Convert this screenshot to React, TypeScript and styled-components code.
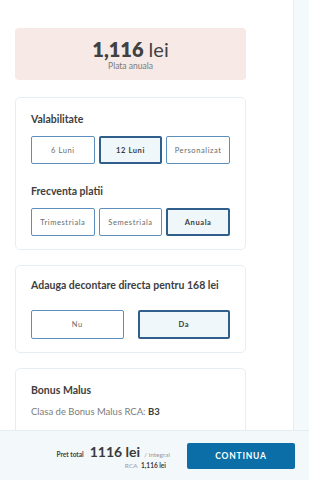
import React, { useState } from 'react';
import styled, { createGlobalStyle } from 'styled-components';

const GlobalStyle = createGlobalStyle`
    html, body {
        margin: 0;
        padding: 0;
        background: #ffffff;
        font-family: Lato, "Open Sans", sans-serif;
        color: #414141;
    }
    * { box-sizing: border-box; }
`;

export const Page = styled.div`
    display: flex;
    height: 480px;
    overflow: hidden;
`;

export const Main = styled.div`
    width: 293px;
    padding: 28px 47px 0 15px;
    display: flex;
    flex-direction: column;
    gap: 15px;
`;

export const Sidebar = styled.aside`
    flex: 1;
    background: #f4f9fc;
    border-left: 1px solid #e6eef4;
`;

export const PriceBox = styled.div`
    height: 52px;
    margin-bottom: 2px;
    background: #f6e9e6;
    border-radius: 4px;
    display: flex;
    flex-direction: column;
    align-items: center;
    justify-content: center;
`;

export const PriceValue = styled.div`
    font-size: 20px;
    line-height: 22px;
    color: #414141;
    b { font-weight: 800; }
    span { font-weight: 400; }
`;

export const PriceLabel = styled.div`
    font-size: 8.5px;
    color: #7a7a7a;
    margin-top: 1px;
`;

export const Card = styled.section<{ $pad?: string }>`
    flex-shrink: 0;
    border: 1px solid #e6eef4;
    border-radius: 5px;
    padding: ${p => p.$pad || '15px'};
    background: #fff;
`;

export const CardTitle = styled.h3<{ $gap?: number }>`
    margin: 0 0 ${p => p.$gap ?? 10}px;
    font-size: 10.5px;
    line-height: 13px;
    font-weight: 700;
    color: #3e3e3e;
`;

export const OptionRow = styled.div<{ $cols: number; $gap: number }>`
    display: grid;
    grid-template-columns: repeat(${p => p.$cols}, 1fr);
    gap: ${p => p.$gap}px;
`;

export const Option = styled.button<{ $active: boolean; $h: number }>`
    height: ${p => p.$h}px;
    padding: 0;
    font-family: inherit;
    font-size: 7.5px;
    letter-spacing: 0.6px;
    font-weight: ${p => (p.$active ? 700 : 400)};
    color: ${p => (p.$active ? '#3a3a3a' : '#6a6a6a')};
    background: ${p => (p.$active ? '#eff7fa' : '#fff')};
    border: ${p => (p.$active ? '2px solid #2f5f8a' : '1px solid #5c8fbd')};
    border-radius: 2px;
    cursor: pointer;
`;

export const Section = styled.div`
    margin-top: 21px;
`;

export const Info = styled.p`
    margin: 0;
    font-size: 9.5px;
    color: #7b7b7b;
    b { color: #3a3a3a; font-weight: 700; }
`;

export const Footer = styled.footer`
    position: fixed;
    left: 0;
    right: 0;
    bottom: 0;
    height: 50px;
    background: #f3f8fb;
    border-top: 1px solid #e3edf3;
    display: flex;
    align-items: center;
    justify-content: flex-end;
    gap: 17px;
    padding-right: 14px;
`;

export const Totals = styled.div`
    display: flex;
    flex-direction: column;
    align-items: flex-end;
`;

export const TotalLine = styled.div`
    display: flex;
    align-items: baseline;
    gap: 6px;
`;

export const TotalLabel = styled.span`
    font-size: 6.5px;
    font-weight: 700;
    color: #3e3e3e;
`;

export const TotalValue = styled.span`
    font-size: 14px;
    font-weight: 700;
    color: #3a3a3a;
`;

export const TotalUnit = styled.span`
    font-size: 6.5px;
    color: #9a9a9a;
    margin-left: -2px;
`;

export const SubTotal = styled.div`
    margin-top: 2px;
    margin-right: 4px;
    font-size: 6.5px;
    color: #9a9a9a;
    b { color: #3a3a3a; font-weight: 700; margin-left: 2px; }
`;

export const Continue = styled.button`
    width: 108px;
    height: 26px;
    border: none;
    border-radius: 2px;
    background: #0b6ea7;
    color: #fff;
    font-family: inherit;
    font-size: 8.5px;
    font-weight: 700;
    letter-spacing: 0.8px;
    cursor: pointer;
`;

const validity = ['6 Luni', '12 Luni', 'Personalizat'];
const frequency = ['Trimestriala', 'Semestriala', 'Anuala'];

export default function App() {
    const [term, setTerm] = useState('12 Luni');
    const [freq, setFreq] = useState('Anuala');
    const [direct, setDirect] = useState('Da');

    return (
        <>
            <GlobalStyle />
            <Page>
                <Main>
                    <PriceBox>
                        <PriceValue><b>1,116</b> <span>lei</span></PriceValue>
                        <PriceLabel>Plata anuala</PriceLabel>
                    </PriceBox>

                    <Card $pad="15px 15px 13px">
                        <CardTitle>Valabilitate</CardTitle>
                        <OptionRow $cols={3} $gap={4}>
                            {validity.map(v => (
                                <Option key={v} $h={28} $active={term === v} onClick={() => setTerm(v)}>{v}</Option>
                            ))}
                        </OptionRow>
                        <Section>
                            <CardTitle>Frecventa platii</CardTitle>
                            <OptionRow $cols={3} $gap={4}>
                                {frequency.map(f => (
                                    <Option key={f} $h={28} $active={freq === f} onClick={() => setFreq(f)}>{f}</Option>
                                ))}
                            </OptionRow>
                        </Section>
                    </Card>

                    <Card $pad="13px 15px 13px">
                        <CardTitle $gap={18}>Adauga decontare directa pentru 168 lei</CardTitle>
                        <OptionRow $cols={2} $gap={14}>
                            {['Nu', 'Da'].map(o => (
                                <Option key={o} $h={29} $active={direct === o} onClick={() => setDirect(o)}>{o}</Option>
                            ))}
                        </OptionRow>
                    </Card>

                    <Card $pad="15px 15px 30px">
                        <CardTitle $gap={9}>Bonus Malus</CardTitle>
                        <Info>Clasa de Bonus Malus RCA: <b>B3</b></Info>
                    </Card>
                </Main>
                <Sidebar />
            </Page>

            <Footer>
                <Totals>
                    <TotalLine>
                        <TotalLabel>Pret total</TotalLabel>
                        <TotalValue>1116 lei</TotalValue>
                        <TotalUnit>/ integral</TotalUnit>
                    </TotalLine>
                    <SubTotal>RCA <b>1,116 lei</b></SubTotal>
                </Totals>
                <Continue>CONTINUA</Continue>
            </Footer>
        </>
    );
}
